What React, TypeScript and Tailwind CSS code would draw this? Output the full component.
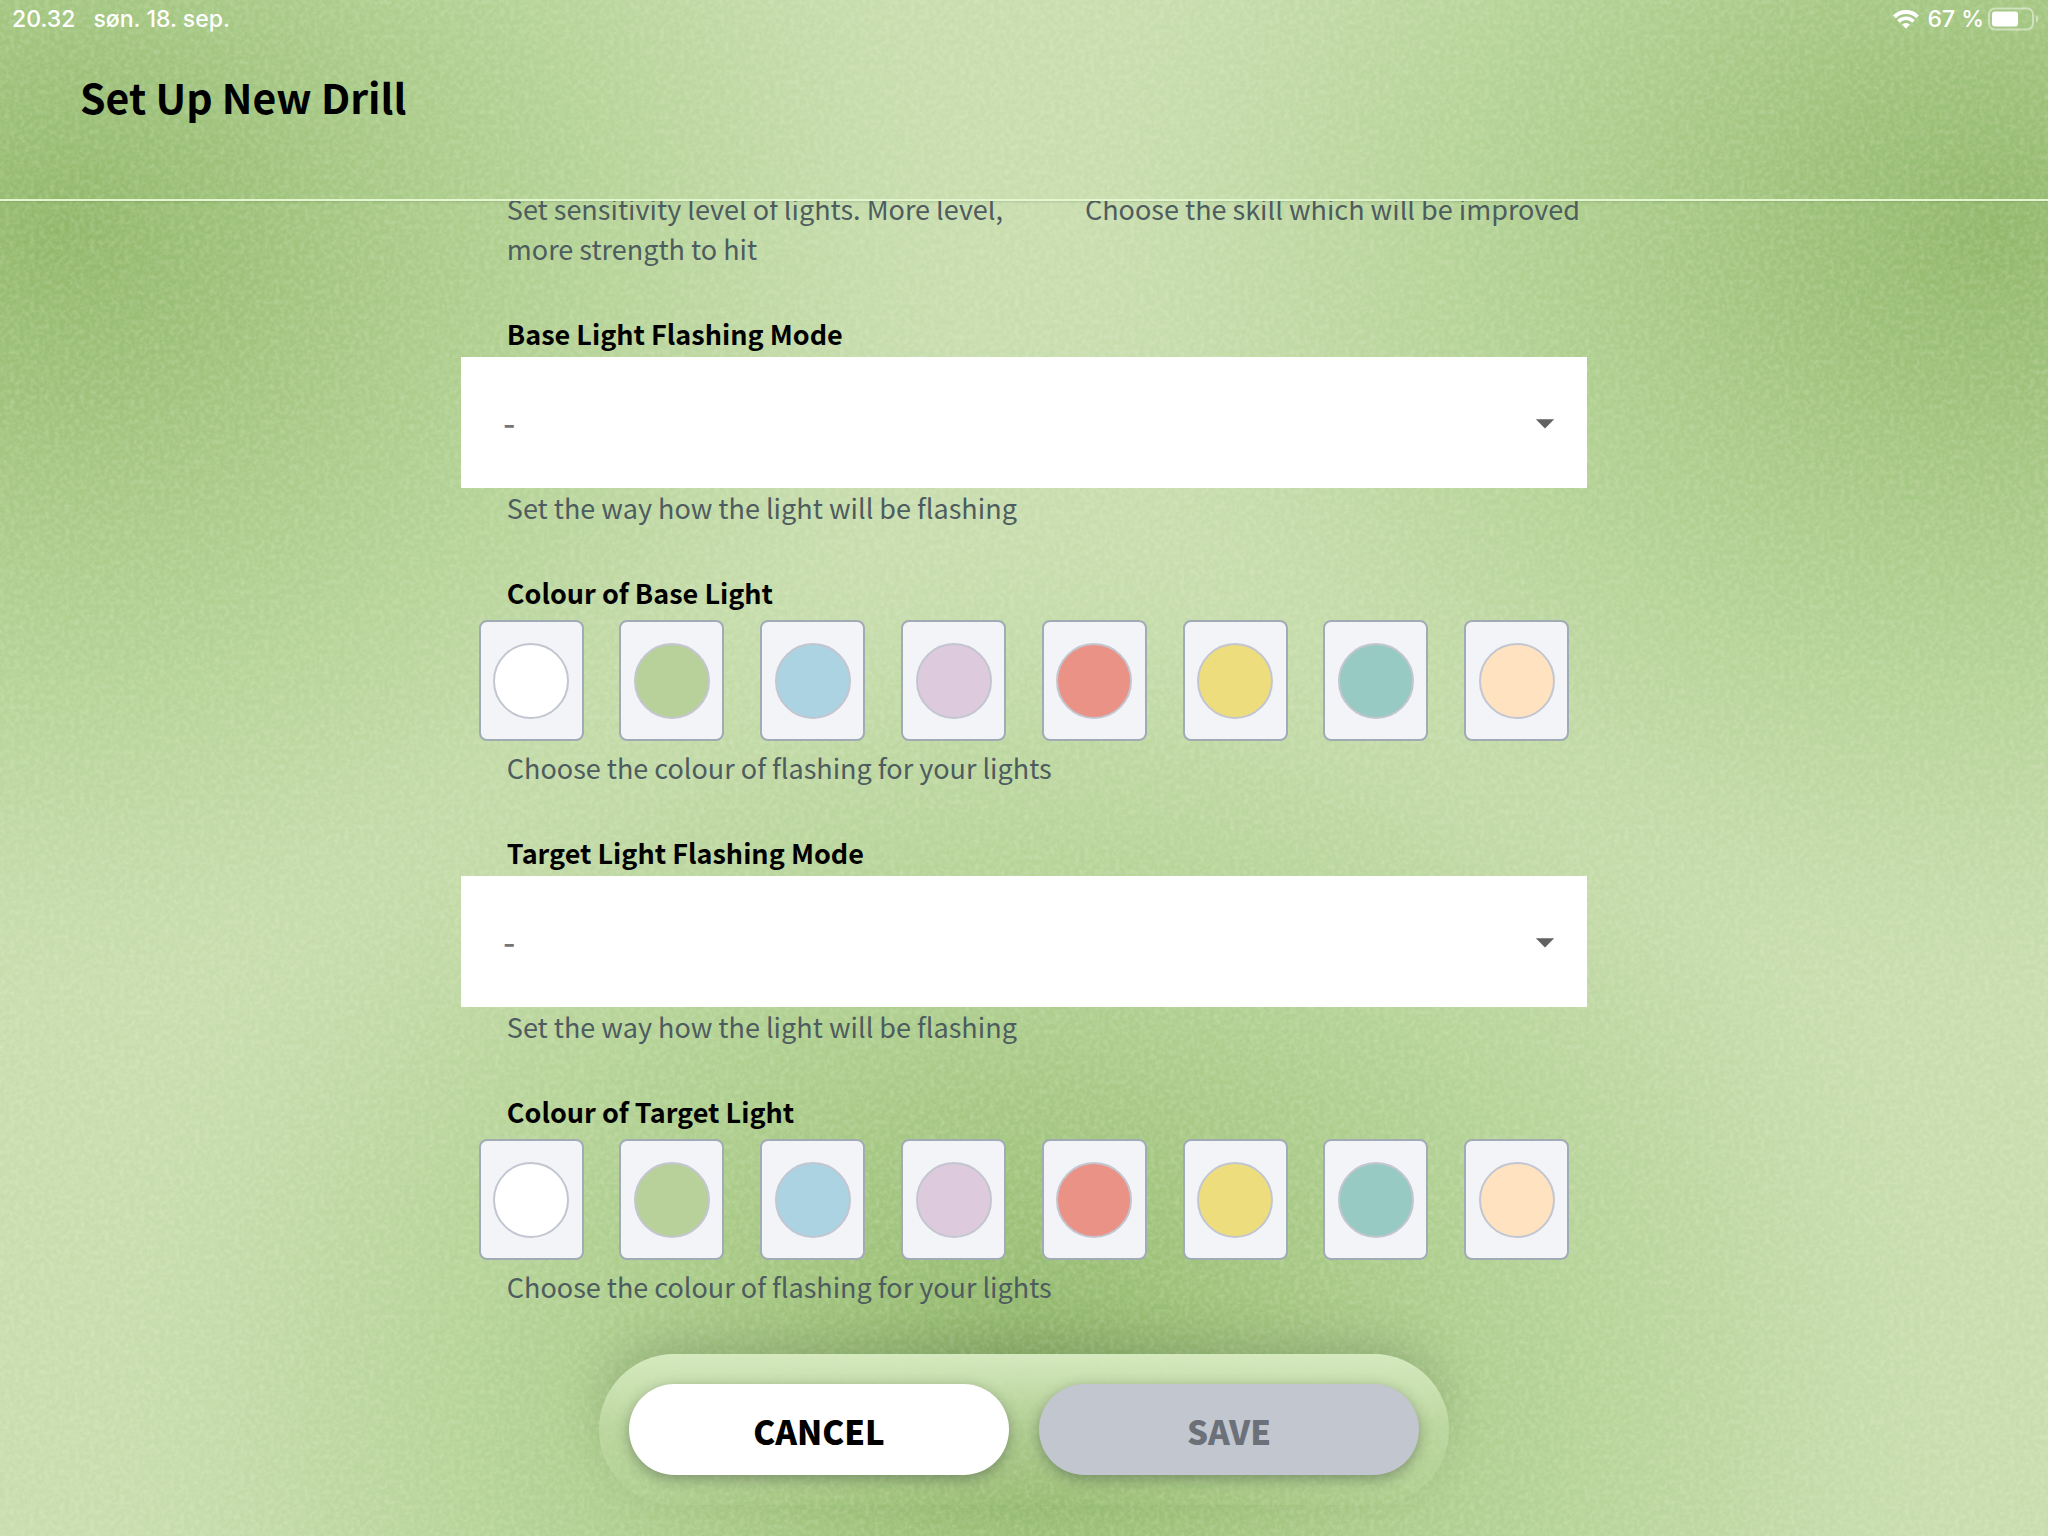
import React, { useId } from "react";

const palette = [
  { name: "White", fill: "bg-white" },
  { name: "Green", fill: "bg-[#b8d19b]" },
  { name: "Blue", fill: "bg-[#abd3e2]" },
  { name: "Lilac", fill: "bg-[#ddcadc]" },
  { name: "Red", fill: "bg-[#eb9286]" },
  { name: "Yellow", fill: "bg-[#eedd7c]" },
  { name: "Teal", fill: "bg-[#97cac2]" },
  { name: "Peach", fill: "bg-[#ffe2c0]" },
];

function Backdrop() {
  return (
    <svg
      aria-hidden="true"
      className="absolute inset-0 -z-10 h-full w-full"
      viewBox="0 0 2048 1536"
      preserveAspectRatio="none"
    >
      <defs>
        <radialGradient id="side">
          <stop offset="0" stopColor="#91b76b" stopOpacity="1" />
          <stop offset="0.2" stopColor="#98be74" stopOpacity="0.9" />
          <stop offset="0.5" stopColor="#a4c982" stopOpacity="0.68" />
          <stop offset="0.75" stopColor="#afcf90" stopOpacity="0.4" />
          <stop offset="1" stopColor="#bcd89f" stopOpacity="0" />
        </radialGradient>
        <radialGradient id="floor">
          <stop offset="0" stopColor="#8cb267" stopOpacity="1" />
          <stop offset="0.2" stopColor="#98be73" stopOpacity="0.9" />
          <stop offset="0.5" stopColor="#a4c982" stopOpacity="0.65" />
          <stop offset="0.75" stopColor="#afcf90" stopOpacity="0.4" />
          <stop offset="1" stopColor="#bfdaa3" stopOpacity="0" />
        </radialGradient>
        <filter id="grain" x="0" y="0" width="100%" height="100%">
          <feTurbulence type="fractalNoise" baseFrequency="0.2" numOctaves="3" seed="4" />
          <feColorMatrix values="0 0 0 0 1  0 0 0 0 1  0 0 0 0 0.85  1 0 0 0 -0.36" />
        </filter>
      </defs>
      <rect width="2048" height="1536" fill="#c8ddae" />
      <ellipse cx="60" cy="230" rx="900" ry="760" fill="url(#side)" />
      <ellipse cx="1990" cy="230" rx="900" ry="760" fill="url(#side)" />
      <ellipse cx="1024" cy="1390" rx="940" ry="860" fill="url(#floor)" />
      <rect width="2048" height="1536" filter="url(#grain)" opacity="0.38" />
    </svg>
  );
}

function StatusBar() {
  return (
    <div className="flex h-[38px] items-center justify-between pl-3 pr-2 font-['Inter',sans-serif] text-[23px] font-medium leading-[38px] text-white">
      <div className="flex gap-[18px]">
        <span>20.32</span>
        <span>søn. 18. sep.</span>
      </div>
      <div className="flex items-center gap-2">
        <svg viewBox="0 0 26 19" className="h-[19px] w-[26px]" fill="none" aria-label="Wi-Fi">
          <path d="M1.4 6.8a16.4 16.4 0 0 1 23.2 0" stroke="white" strokeWidth="3.8" />
          <path d="M5.5 11.4a10.6 10.6 0 0 1 15 0" stroke="white" strokeWidth="3.6" />
          <path d="M13 18.8l-4-4.2a5.7 5.7 0 0 1 8 0z" fill="white" />
        </svg>
        <span>67 %</span>
        <svg viewBox="0 0 52 24" className="-ml-1 h-6 w-[52px]" fill="none" aria-label="Battery">
          <rect x="1" y="1.5" width="44" height="21" rx="6" stroke="white" strokeOpacity="0.45" strokeWidth="2" />
          <rect x="4" y="4.5" width="26" height="15" rx="3" fill="white" />
          <path d="M48 8.5c3 1 3 6 0 7z" fill="white" fillOpacity="0.5" />
        </svg>
      </div>
    </div>
  );
}

function Help({ children }: { children: React.ReactNode }) {
  return <p className="pl-[46px] text-[27px] leading-10 text-[#4d5c5e]">{children}</p>;
}

function ModeField({ label }: { label: string }) {
  const id = useId();
  return (
    <section>
      <label htmlFor={id} className="mb-[3px] block pl-[46px] text-[27px] font-bold leading-10">
        {label}
      </label>
      <div className="relative">
        <select
          id={id}
          className="block h-[131px] w-full appearance-none bg-white pl-[42px] pr-20 pt-1 font-['Inter',sans-serif] text-[28px] font-medium text-[#757575] outline-none"
        >
          <option>-</option>
        </select>
        <svg
          viewBox="0 0 24 24"
          className="pointer-events-none absolute right-5 top-1/2 size-11 -translate-y-1/2"
          fill="#616161"
          aria-hidden="true"
        >
          <path d="M7 10l5 5 5-5z" />
        </svg>
      </div>
      <Help>Set the way how the light will be flashing</Help>
    </section>
  );
}

function ColourField({ label }: { label: string }) {
  const id = useId();
  return (
    <section>
      <h2 id={id} className="mb-[3px] pl-[46px] text-[27px] font-bold leading-10">
        {label}
      </h2>
      <div role="radiogroup" aria-labelledby={id} className="grid grid-cols-8 justify-items-center pb-[7px] pt-1">
        {palette.map((c) => (
          <label
            key={c.name}
            className="flex h-[121px] w-[105px] items-center justify-center rounded-lg border-2 border-[#a0abb4] bg-[#f2f4f8]"
          >
            <input
              type="radio"
              name={id}
              aria-label={c.name}
              className={`size-[76px] appearance-none rounded-full border-2 border-[#c3c6d0] ${c.fill}`}
            />
          </label>
        ))}
      </div>
      <Help>Choose the colour of flashing for your lights</Help>
    </section>
  );
}

export default function App() {
  return (
    <div className="relative isolate flex min-h-screen flex-col font-['Noto_Sans_CJK_SC',sans-serif] text-black">
      <Backdrop />
      <header className="border-b-2 border-[#e3f7cf] shadow-[0_0_3px_rgba(60,90,60,0.35)]">
        <StatusBar />
        <h1 className="mb-[73px] mt-7 pl-20 text-[41px] font-bold leading-[60px]">Set Up New Drill</h1>
      </header>

      <main className="flex flex-1 flex-col items-center overflow-hidden">
        <form className="-mt-3 flex w-[55%] flex-col gap-[45px]">
          <div className="grid grid-cols-2 gap-[30px]">
            <Help>Set sensitivity level of lights. More level, more strength to hit</Help>
            <Help>Choose the skill which will be improved</Help>
          </div>
          <ModeField label="Base Light Flashing Mode" />
          <ColourField label="Colour of Base Light" />
          <ModeField label="Target Light Flashing Mode" />
          <ColourField label="Colour of Target Light" />
        </form>
      </main>

      <footer className="flex justify-center pb-[31px]">
        <div className="flex gap-[30px] rounded-[76px] bg-linear-to-b from-[#d5e9be] via-[#c3dba8]/60 to-transparent p-[30px] shadow-[0_-18px_44px_-8px_rgba(70,90,60,0.26)]">
          <button
            type="button"
            className="h-[91px] w-[380px] rounded-full bg-white pt-1 text-[33px] font-black shadow-[0_4px_14px_rgba(60,70,60,0.45)]"
          >
            CANCEL
          </button>
          <button
            type="button"
            disabled
            className="h-[91px] w-[380px] rounded-full bg-[#c2c6cf] pt-1 text-[33px] font-black text-[#6b7079] shadow-[0_4px_14px_rgba(60,70,60,0.45)]"
          >
            SAVE
          </button>
        </div>
      </footer>
    </div>
  );
}
